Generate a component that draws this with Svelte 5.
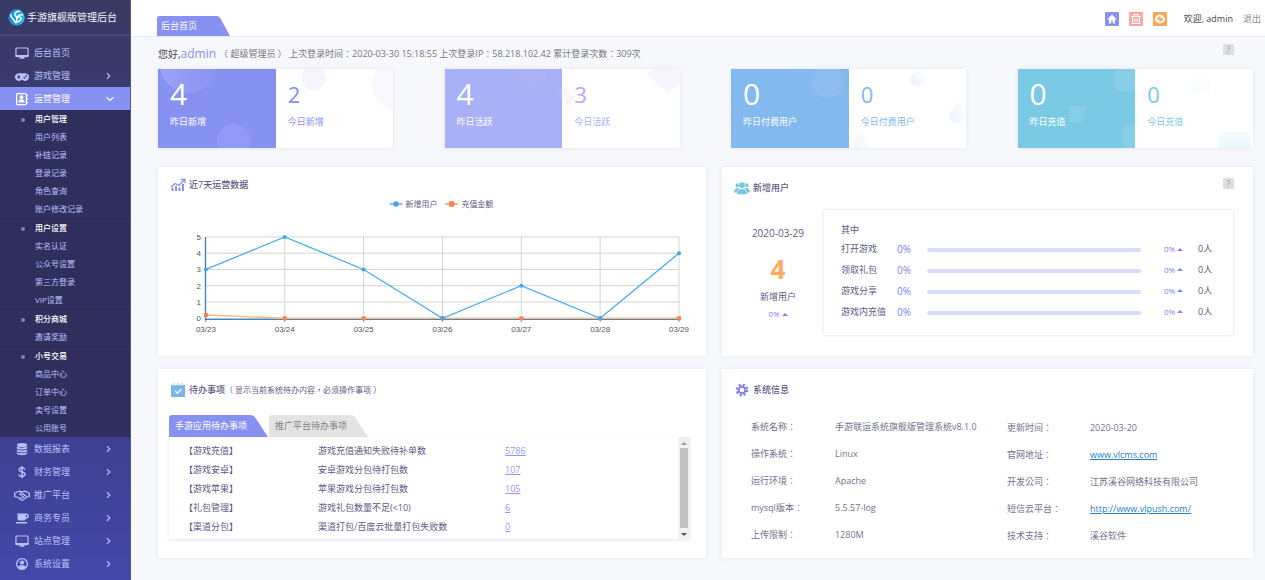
<script>
  const topNav = [
    { icon: 'monitor', label: '后台首页', arrow: false },
    { icon: 'game', label: '游戏管理', arrow: true }
  ];
  const groups = [
    { title: '用户管理', items: ['用户列表', '补链记录', '登录记录', '角色查询', '账户修改记录'] },
    { title: '用户设置', items: ['实名认证', '公众号设置', '第三方登录', 'VIP设置'] },
    { title: '积分商城', items: ['邀请奖励'] },
    { title: '小号交易', items: ['商品中心', '订单中心', '卖号设置', '公用账号'] }
  ];
  const bottomNav = [
    { icon: 'data', label: '数据报表', arrow: true },
    { icon: 'dollar', label: '财务管理', arrow: true },
    { icon: 'hands', label: '推广平台', arrow: true },
    { icon: 'cup', label: '商务专员', arrow: true },
    { icon: 'monitor', label: '站点管理', arrow: true },
    { icon: 'user', label: '系统设置', arrow: true }
  ];
  const cards = [
    { kind: 'circles', color: '#8791f2', a: 4, al: '昨日新增', b: 2, bl: '今日新增' },
    { kind: 'diamonds', color: '#a8b0f7', a: 4, al: '昨日活跃', b: 3, bl: '今日活跃' },
    { kind: 'drops', color: '#82b9ef', a: 0, al: '昨日付费用户', b: 0, bl: '今日付费用户' },
    { kind: 'squares', color: '#7acae5', a: 0, al: '昨日充值', b: 0, bl: '今日充值' }
  ];
  const days = ['03/23', '03/24', '03/25', '03/26', '03/27', '03/28', '03/29'];
  const users = [3, 5, 3, 0, 2, 0, 4];
  const pay = [0.2, 0, 0, 0, 0, 0, 0];
  const px = (i) => 48 + i * 79;
  const py = (v) => 123.5 - v * 16.3;
  const line = (vals) => vals.map((v, i) => `${px(i)},${py(v)}`).join(' ');
  const todos = [
    ['【游戏充值】', '游戏充值通知失败待补单数', 5786],
    ['【游戏安卓】', '安卓游戏分包待打包数', 107],
    ['【游戏苹果】', '苹果游戏分包待打包数', 105],
    ['【礼包管理】', '游戏礼包数量不足(<10)', 6],
    ['【渠道分包】', '渠道打包/百度云批量打包失败数', 0]
  ];
  const shares = ['打开游戏', '领取礼包', '游戏分享', '游戏内充值'];
  const info = [
    ['系统名称：', '手游联运系统旗舰版管理系统v8.1.0', '更新时间：', '2020-03-20', false],
    ['操作系统：', 'Linux', '官网地址：', 'www.vlcms.com', true],
    ['运行环境：', 'Apache', '开发公司：', '江苏溪谷网络科技有限公司', false],
    ['mysql版本：', '5.5.57-log', '短信云平台：', 'http://www.vlpush.com/', true],
    ['上传限制：', '1280M', '技术支持：', '溪谷软件', false]
  ];
</script>

{#snippet navIcon(name)}
  <svg class="nav-icon" viewBox="0 0 16 14" aria-hidden="true">
    {#if name === 'monitor'}
      <rect x="2" y="2" width="12" height="8.6" rx="1" fill="none" stroke="currentColor" stroke-width="1.2" />
      <path d="M1.5 9h13v2h-13zM6 11h4l.6 1.8H5.4z" fill="currentColor" />
    {:else if name === 'game'}
      <path d="M5 4.3h6a3.8 3.8 0 1 1-2.3 6.6H7.3A3.8 3.8 0 1 1 5 4.3z" fill="currentColor" />
      <path d="M4.8 6.2v3.6M3 8h3.6" stroke="#393a68" stroke-width="1.1" />
      <circle cx="10.4" cy="8.8" r=".9" fill="#393a68" /><circle cx="12.2" cy="7.1" r=".9" fill="#393a68" />
    {:else if name === 'book'}
      <rect x="2.6" y="1.6" width="9.8" height="11" rx="1" fill="none" stroke="currentColor" stroke-width="1.2" />
      <path d="M13.3 2.5v2M13.3 6v2M13.3 9.5v2" stroke="currentColor" stroke-width="1" />
      <circle cx="7.5" cy="5.2" r="1.9" fill="currentColor" />
      <path d="M4.4 10.6c0-2.4 1-3.4 3.1-3.4s3.1 1 3.1 3.4z" fill="currentColor" />
    {:else if name === 'data'}
      <ellipse cx="8" cy="2.9" rx="5.2" ry="2" fill="currentColor" />
      <path d="M2.8 4.6c2 1.5 8.4 1.5 10.4 0v1.8c-2 1.6-8.4 1.6-10.4 0zM2.8 7.4c2 1.5 8.4 1.5 10.4 0v1.8c-2 1.6-8.4 1.6-10.4 0zM2.8 10.2c2 1.5 8.4 1.5 10.4 0v1.5c-2 1.9-8.4 1.9-10.4 0z" fill="currentColor" />
    {:else if name === 'dollar'}
      <path d="M10.8 4.6C10.4 3.3 9.4 2.8 8 2.8c-1.7 0-2.8.8-2.8 2C5.2 7.7 11 6.3 11 9.3c0 1.3-1.2 2.1-3 2.1-1.7 0-2.8-.7-3.1-2.1M8 1v12.2" fill="none" stroke="currentColor" stroke-width="1.4" />
    {:else if name === 'hands'}
      <path d="M.7 4.4v4.800M15.3 4.400v4.800" stroke="currentColor" stroke-width="1.4" />
      <path d="M1.5 4.6 5 3.2l3 .6 3-.6 3.500 1.400M1.500 8.800l2 .2 3.700 3q1 .7 2-.1l3.500-2.900 1.800-.2M8 3.800 5.700 6.200q.9 1.500 2.600.1l.9-.6 3.300 3.100M6.500 9.200l1.700 1.400M8 7.800l2.100 2" fill="none" stroke="currentColor" stroke-width="1.2" stroke-linejoin="round" />
    {:else if name === 'cup'}
      <path d="M3.5 2.5h8.7a2.6 2.6 0 0 1 0 5.2h-.4c-.2 1.2-.9 1.9-2 1.9H5.5c-1.3 0-2-.8-2-2zm8.4 1.4v2.4h.3a1.2 1.2 0 0 0 0-2.4zM2 11h11v1.4H2z" fill="currentColor" fill-rule="evenodd" />
    {:else}
      <circle cx="8" cy="7" r="5.4" fill="none" stroke="currentColor" stroke-width="1.3" />
      <circle cx="8" cy="5.6" r="2.1" fill="currentColor" />
      <path d="M3.9 10.5c.5-1.8 2-2.3 4.1-2.3s3.6.5 4.1 2.3c-1.8 2.4-6.4 2.4-8.2 0z" fill="currentColor" />
    {/if}
  </svg>
{/snippet}

{#snippet navRow(item)}
  <a class="nav-row" href="#top">
    {@render navIcon(item.icon)}
    <span class="nav-label">{item.label}</span>
    {#if item.arrow}
      <svg class="chev" viewBox="0 0 8 8" aria-hidden="true"><path d="M1 1.2 3.8 4 1 6.8" fill="none" stroke="currentColor" stroke-width="1.2" /></svg>
    {/if}
  </a>
{/snippet}

{#snippet tabShape(fill)}
  <svg class="tab-shape" viewBox="0 0 100 20" preserveAspectRatio="none" aria-hidden="true">
    <path d="M0 20V3Q0 0 3 0H82Q85.5 0 87.5 3L100 20z" {fill} />
  </svg>
{/snippet}

<div class="layout">
  <nav class="side">
    <div class="brand">
      <svg viewBox="0 0 18 18" aria-hidden="true">
        <defs><linearGradient id="logo" x1="0" y1="0" x2="1" y2="0"><stop offset="0" stop-color="#1c7fd0" /><stop offset="1" stop-color="#2fc3ea" /></linearGradient></defs>
        <circle cx="9" cy="9" r="8.7" fill="url(#logo)" />
        <path d="M12 2.500C7 3 6 5.500 8.200 7.500c1.800 1.600 1.600 4-.2 7M3 6c-.5 3.500 3 4 4 7.500M15 6.200c-3-.6-5 .8-5 3 2-1.200 4.200-.6 3.800 1.200-.4 1.900-2.500 3-5 3.800" fill="none" stroke="#fff" stroke-width="1.6" stroke-linecap="round" />
      </svg>
      <span>手游旗舰版管理后台</span>
    </div>
    <div class="nav-top">
      {#each topNav as item}{@render navRow(item)}{/each}
      <a class="nav-row active" href="#top">
        {@render navIcon('book')}
        <span class="nav-label">运营管理</span>
        <svg class="chev" viewBox="0 0 8 8" aria-hidden="true"><path d="M.5 2.2 4 5.4l3.5-3.2" fill="none" stroke="currentColor" stroke-width="1.2" /></svg>
      </a>
    </div>
    <div class="sub">
      {#each groups as g}
        <div class="group">
          <div class="group-title">{g.title}</div>
          {#each g.items as it}<a href="#top">{it}</a>{/each}
        </div>
      {/each}
    </div>
    {#each bottomNav as item}{@render navRow(item)}{/each}
  </nav>

  <div class="main">
    <header>
      <button class="tab page-tab">{@render tabShape('#8791f2')}<span>后台首页</span></button>
      <div class="tools">
        <button class="tool" aria-label="首页">
          <svg viewBox="0 0 14 14"><rect width="14" height="14" rx="1" fill="#8791f2" /><path d="M7 2.6 2.8 6.8v.7H4v4h2.200V8.600h1.600v2.900H10v-4h1.200v-.7z" fill="#fff" /></svg>
        </button>
        <button class="tool" aria-label="清除">
          <svg viewBox="0 0 14 14"><rect width="14" height="14" rx="1" fill="#fba5a4" /><path d="M2 4.5h10M5 4V2.500h4V4M3.500 5v6.500h7V5M5.700 6.500v3.600M8.300 6.500v3.600" fill="none" stroke="#fff" stroke-width="1.2" /></svg>
        </button>
        <button class="tool" aria-label="刷新">
          <svg viewBox="0 0 14 14"><rect width="14" height="14" rx="1" fill="#fea654" /><path d="M3.200 8.800C2.200 5.500 5 3 8.200 3.700M10.800 5.200c1 3.300-1.800 5.800-5 5.100" fill="none" stroke="#fff" stroke-width="1.9" /><path d="M8.800 2.400 11.600 6 7.400 6.200zM5.200 11.600 2.400 8l4.200-.2z" fill="#fff" /></svg>
        </button>
        <span class="welcome">欢迎, admin</span>
        <a class="logout" href="#top">退出</a>
      </div>
    </header>

    <main>
      <div class="greet">
        <span class="hello">您好,</span><span class="name">admin</span>
        <span class="detail">（ 超级管理员 ） 上次登录时间：2020-03-30 15:18:55 上次登录IP：58.218.102.42 累计登录次数：309次</span>
        <button class="help" aria-label="帮助">?</button>
      </div>

      <section class="cards">
        {#each cards as c}
          <div class="card" style="--c:{c.color}">
            <div class="half solid"></div>
            <svg class="decor" viewBox="0 0 236 79" preserveAspectRatio="none" aria-hidden="true">
              {#if c.kind === 'circles'}
                <defs><linearGradient id="fade"><stop offset="0" stop-color="#fff" stop-opacity=".16" /><stop offset="1" stop-color="#fff" stop-opacity=".02" /></linearGradient></defs>
                <circle cx="31" cy="-5" r="29" fill="url(#fade)" />
                <circle cx="76" cy="72" r="17" fill="#fff" opacity=".08" />
                <circle cx="156" cy="9" r="12" fill="#f6f5fd" /><circle cx="244" cy="14" r="29" fill="#f8f8fe" />
              {:else if c.kind === 'diamonds'}
                <path d="M62 0h36l6 7-17 16z" fill="#d9c8ee" opacity=".1" />
                <path d="M118 17l12 11-6 8-6-5z" fill="#faf6fd" /><path d="M111 23l7-6v14z" fill="#fff" opacity=".08" />
                <path d="M202 6l7-6h27v14l-12 10z" fill="#f9f5fd" />
              {:else if c.kind === 'drops'}
                <path d="M84 0h26c7 12 4 29-13 29S77 12 84 0z" fill="#a9c4f0" opacity=".3" />
                <defs><linearGradient id="drop" x1="0" y1=".8" x2="1" y2=".2"><stop offset="0" stop-color="#e9f3fd" /><stop offset="1" stop-color="#fdfeff" /></linearGradient></defs>
                <g fill="url(#drop)">
                  <path d="M187 0c3 4 7 7 7 11a7 7 0 0 1-14 0c0-4 4-7 7-11z" />
                  <path d="M228 32c4 5 6 8 6 14 0 11-15 10-15 1 0-5 6-9 9-15z" />
                  <path d="M130 61c4 5 9 10 8 18h-14c-2-7 3-12 6-18z" opacity=".7" />
                </g>
              {:else}
                <g fill="#fff" opacity=".1"><path d="M97 0h21v22H97zM105 55h13v24h-13zM51 37h19l-7 16H51z" /></g>
                <defs><linearGradient id="sq" x2="0" y2="1"><stop offset="0" stop-color="#f7fcfe" /><stop offset="1" stop-color="#e7f8fc" /></linearGradient></defs>
                <path d="M174 10h18v15h-18z" fill="#f9fdfe" /><path d="M201 63h32v16h-32z" fill="url(#sq)" />
              {/if}
            </svg>
            <div class="stat first"><b>{c.a}</b><span>{c.al}</span></div>
            <div class="stat"><b>{c.b}</b><span>{c.bl}</span></div>
          </div>
        {/each}
      </section>

      <div class="grid">
        <section class="panel">
          <h2>
            <svg viewBox="0 0 16 14" aria-hidden="true"><path d="M1 9 5 5.5l4 2L14 2M10.8 1.3H15v4" fill="none" stroke="#8791f2" stroke-width="1.3" /><path d="M2.5 9.5V13M6 8v5M9.5 9.5V13M13 6v7" stroke="#8791f2" stroke-width="2" /></svg>
            近7天运营数据
          </h2>
          <svg class="chart" viewBox="0 0 549 158" role="img" aria-label="近7天运营数据">
            <g class="legend">
              <path d="M232 9h13" stroke="#3fa7f0" stroke-width="1.3" /><circle cx="238.5" cy="9" r="2.7" fill="#3fa7f0" /><text x="248" y="12">新增用户</text>
              <path d="M287.5 9h13" stroke="#ff7f50" stroke-width="1.3" /><rect x="291.5" y="6.3" width="5.4" height="5.4" fill="#ff7f50" /><text x="304" y="12">充值金额</text>
            </g>
            <g stroke="#d4d4d4" stroke-width="1">
              {#each [1, 2, 3, 4, 5] as v}<path d="M48 {py(v)}H522" />{/each}
              {#each days as d, i}<path d="M{px(i)} 42V123" />{/each}
            </g>
            <path d="M47.5 42V124.500H522" fill="none" stroke="#4488bb" stroke-width="1.3" />
            {#each days as d, i}<path d="M{px(i)} 124V127" stroke="#444" stroke-width=".7" /><text class="tick" x={px(i)} y="137" text-anchor="middle">{d}</text>{/each}
            {#each [0, 1, 2, 3, 4, 5] as v}<text class="tick" x="43" y={py(v) + 3} text-anchor="end">{v}</text>{/each}
            <polyline points={line(pay)} fill="none" stroke="#ffb980" stroke-width="1.3" />
            {#each pay as v, i}<rect x={px(i) - 2} y={py(v) - 2} width="4" height="4" fill="#ff7f50" />{/each}
            <polyline points={line(users)} fill="none" stroke="#4aabf1" stroke-width="1.3" />
            {#each users as v, i}<circle cx={px(i)} cy={py(v)} r="2" fill="#3fa7f0" />{/each}
          </svg>
        </section>

        <section class="panel">
          <div class="title-row">
            <h2>
              <svg viewBox="0 0 16 14" aria-hidden="true"><g fill="#74c6e4"><circle cx="3.6" cy="4.3" r="2" /><circle cx="12.4" cy="4.3" r="2" /><path d="M0 11.5C0 8.5 1.6 7 4 7l1.5.6L3 11.5zM16 11.5C16 8.5 14.4 7 12 7l-1.5.6 2.5 3.9z" /></g><g fill="#74c6e4" stroke="#fff" stroke-width=".6"><path d="M2.5 13.6C2.5 10 4.5 7.800 8 7.800s5.500 2.200 5.500 5.800z" /><circle cx="8" cy="4.2" r="3.2" /></g></svg>
              新增用户
            </h2>
            <button class="help" aria-label="帮助">?</button>
          </div>
          <div class="new-users">
            <div class="summary">
              <span class="date">2020-03-29</span>
              <b>4</b>
              <span>新增用户</span>
              <span class="trend">0%<i></i></span>
            </div>
            <div class="box">
              <div class="box-title">其中</div>
              {#each shares as s}
                <div class="share">
                  <span>{s}</span><span class="pct">0%</span><div class="bar"></div><span class="trend">0%<i></i></span><span class="count">0人</span>
                </div>
              {/each}
            </div>
          </div>
        </section>

        <section class="panel lower">
          <h2>
            <svg viewBox="0 0 16 14" aria-hidden="true"><path d="M1 2h14v12H1z" fill="#79b5ec" /><path d="M4 0v3M8 0v3M12 0v3" stroke="#b9daf7" stroke-width="1.5" /><path d="M5 8l2.5 2.3L11.3 6" fill="none" stroke="#fff" stroke-width="1.5" /></svg>
            <span>待办事项<small>（ 显示当前系统待办内容，必须操作事项 ）</small></span>
          </h2>
          <div class="tabs">
            <button class="tab">{@render tabShape('#8791f2')}<span>手游应用待办事项</span></button>
            <button class="tab off">{@render tabShape('#e3e3e3')}<span>推广平台待办事项</span></button>
          </div>
          <div class="todo">
            <table>
              <tbody>
                {#each todos as t}<tr><td class="kind">{t[0]}</td><td class="what">{t[1]}</td><td><a href="#top">{t[2]}</a></td></tr>{/each}
              </tbody>
            </table>
            <div class="scroll" aria-hidden="true"><i class="up"></i><div class="thumb"></div><i class="down"></i></div>
          </div>
        </section>

        <section class="panel lower">
          <h2>
            <svg viewBox="0 0 16 14" aria-hidden="true"><circle cx="8" cy="7" r="3.3" fill="none" stroke="#8580ea" stroke-width="2" /><circle cx="8" cy="7" r="5.2" fill="none" stroke="#8580ea" stroke-width="2.4" stroke-dasharray="2.2 1.884" /></svg>
            系统信息
          </h2>
          <table class="info">
            <tbody>
              {#each info as r}
                <tr><th>{r[0]}</th><td class="v1">{r[1]}</td><th class="k2">{r[2]}</th><td class="v2">{#if r[4]}<a href="#top">{r[3]}</a>{:else}{r[3]}{/if}</td></tr>
              {/each}
            </tbody>
          </table>
        </section>
      </div>
    </main>
  </div>
</div>

<style>
  :global(body) {
    margin: 0;
    background: #f7f8fc;
    font: 9px/12px "Open Sans", "Noto Sans CJK SC", sans-serif;
    color: #5c5b85;
  }
  :global(*) { box-sizing: border-box; }
  button { font: inherit; border: 0; padding: 0; background: none; cursor: pointer; }
  a { text-decoration: none; color: inherit; }
  .layout { display: flex; min-height: 100vh; }
  .side {
    width: 131px;
    flex: none;
    background: linear-gradient(#393a63 0, #3a3b70 100px, #3d3f90 430px, #4448a8 580px);
    border-right: 1px solid #55578c;
    color: #b9c0fb;
  }
  .brand {
    display: flex;
    align-items: center;
    gap: 2px;
    height: 36px;
    padding-left: 8px;
    border-bottom: 2px solid #45467a;
    color: #f2f2fa;
    font-size: 10px;
    white-space: nowrap;
  }
  .brand svg { width: 17px; height: 17px; }
  .nav-top { padding-top: 5px; }
  .nav-row { display: flex; align-items: center; height: 23px; padding: 0 16px 0 14px; }
  .nav-row.active { background: #8791f2; color: #fff; }
  .nav-icon { width: 16px; height: 14px; margin-right: 4px; }
  .nav-label { flex: 1; }
  .chev { width: 8px; height: 8px; }
  .sub { background: #2f2f5e; font-size: 8px; }
  .group + .group { padding-top: 1px; box-shadow: inset 0 1px #29294f; }
  .group a, .group-title { display: block; height: 18px; padding-left: 35px; line-height: 18px; }
  .group-title { position: relative; line-height: 17px; color: #fff; font-weight: 500; }
  .group-title::before {
    content: '';
    position: absolute;
    left: 21px;
    top: 8px;
    width: 4px;
    height: 4px;
    border-radius: 50%;
    background: #8284a8;
  }
  .main { flex: 1; min-width: 0; }
  header {
    display: flex;
    justify-content: space-between;
    align-items: flex-end;
    height: 37px;
    padding: 0 4px 0 26px;
    background: #fff;
    border-bottom: 1px solid #e6eaf6;
  }
  .tab { position: relative; display: flex; align-items: center; text-align: left; color: #fff; }
  .tab span { position: relative; }
  .tab-shape { position: absolute; inset: 0; width: 100%; height: 100%; }
  .page-tab { width: 73px; height: 20px; padding-left: 4px; }
  .tools { display: flex; align-items: center; align-self: center; gap: 10px; padding-top: 2px; }
  .tool, .tool svg { display: block; width: 14px; height: 14px; }
  .welcome { margin-left: 7px; color: #444; }
  .logout { color: #8c8c8c; }
  main { padding: 7px 12px 22px 27px; }
  .greet { display: flex; align-items: center; height: 20px; color: #777; }
  .hello { font-size: 10px; color: #444; }
  .name { font-size: 12px; color: #8791f2; }
  .detail, small, th { font-family: "Open Sans", "Noto Sans CJK TC", sans-serif; }
  .detail { margin-left: 3px; }
  .help {
    width: 11px;
    height: 11px;
    margin: 0 19px 0 auto;
    border-radius: 1px;
    background: #dedede;
    color: #999;
    line-height: 11px;
    text-align: center;
  }
  .greet .help { align-self: flex-start; }
  .cards { display: flex; justify-content: space-between; margin-top: 5px; }
  .card {
    position: relative;
    display: flex;
    width: 21.5%;
    height: 79px;
    background: #fff;
    box-shadow: 0 0 4px #dfe5f5;
  }
  .half { position: absolute; inset: 0 50% 0 0; background: var(--c); }
  .decor { position: absolute; inset: 0; width: 100%; height: 100%; }
  .stat { position: relative; flex: 1; padding: 8px 0 0 12px; color: var(--c); }
  .stat b { display: block; height: 34px; font-size: 22px; font-weight: 400; line-height: 34px; }
  .stat span { display: block; margin-top: 5px; }
  .stat.first { color: #fff; }
  .stat.first b { font-size: 30px; }
  .grid { display: grid; grid-template-columns: 549fr 532fr; gap: 13px 16px; margin-top: 19px; }
  .panel { min-width: 0; height: 189px; background: #fff; box-shadow: 0 0 4px #e1e7f5; }
  h2 {
    display: flex;
    align-items: center;
    gap: 3px;
    height: 28px;
    margin: 0;
    padding: 8px 0 0 12px;
    font-size: 9px;
    font-weight: 500;
  }
  h2 svg { width: 16px; height: 14px; }
  h2 small { font-size: 8px; font-weight: 400; }
  .chart { display: block; width: 100%; height: auto; }
  .legend text { font-size: 8px; fill: #5c5b85; }
  .tick { font: 8px "Liberation Sans", sans-serif; fill: #555; }
  .title-row { display: flex; align-items: center; }
  .title-row h2, .lower h2 { height: 33px; }
  .new-users { display: flex; padding: 10px 20px 0 0; }
  .summary { display: flex; flex-direction: column; align-items: center; width: 102px; padding: 17px 0 0 10px; }
  .summary .date { font-size: 10px; }
  .summary b { margin: 14px 0 6px; color: #ffaa61; font-size: 26px; line-height: 32px; }
  .summary .trend { margin-top: 5px; }
  .trend { display: flex; align-items: center; gap: 2px; color: #7b84f3; font-size: 8px; }
  .trend i { border: 3px solid transparent; border-top: 0; border-bottom: 3px solid #7b84f3; }
  .box { flex: 1; height: 125px; padding: 10px 20px 0 17px; box-shadow: 0 0 3px #d5ddef; }
  .box-title { height: 19px; line-height: 19px; }
  .share { display: grid; grid-template-columns: 56px 30px 1fr 34px 15px; align-items: center; height: 21px; }
  .share:nth-child(2) { height: 20px; }
  .pct { color: #7b84f3; font-size: 10px; }
  .bar { height: 4px; margin-right: 23px; margin-top: 2px; border-radius: 2px; background: #d8dcff; }
  .share .count { white-space: nowrap; }
  .tabs { display: flex; gap: 1px; margin: 13px 0 0 11px; }
  .tabs .tab { width: 99px; height: 22px; padding-left: 6px; }
  .tabs .off { color: #858585; }
  .todo { display: flex; height: 102px; margin: 0 16px 0 11px; box-shadow: 0 1px 3px #dfe5f4; overflow: hidden; }
  .todo table { flex: 1; border-collapse: collapse; table-layout: fixed; align-self: flex-start; margin-top: 4px; }
  .todo td { height: 19px; padding: 0; }
  .todo .kind { width: 149px; padding-left: 15px; }
  .todo .what { width: 187px; }
  .todo td a { color: #8f98f5; text-decoration: underline; }
  .scroll { display: flex; flex-direction: column; align-items: center; width: 12px; background: #f1f1f1; }
  .scroll i { margin: 5px 0 3px; border: 3px solid transparent; }
  .scroll .up { border-top: 0; border-bottom-color: #999; }
  .scroll .down { border-bottom: 0; border-top-color: #555; }
  .thumb { flex: 1; width: 8px; background: #c1c1c1; }
  .info { width: 100%; margin-top: 11px; border-collapse: collapse; table-layout: fixed; text-align: left; }
  .info td, .info th { height: 27px; padding: 0; font-weight: 400; white-space: nowrap; color: #72718f; }
  .info th:first-child { width: 113px; padding-left: 29px; }
  .info .v1 { width: 172px; }
  .info .k2 { width: 83px; }
  .info .k2, .info .v2 { padding-top: 2px; }
  .info a { color: #2381cf; text-decoration: underline; }
</style>
